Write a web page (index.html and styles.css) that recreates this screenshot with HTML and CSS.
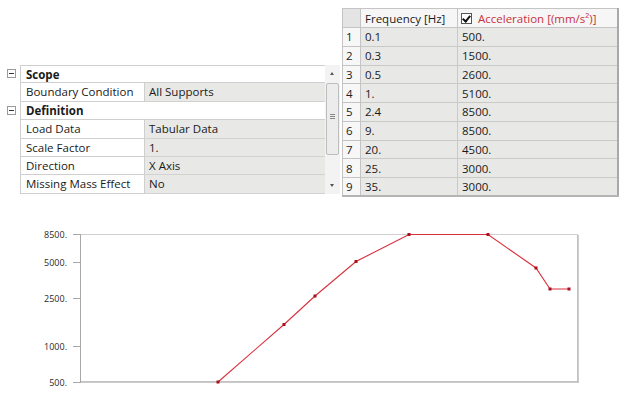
FILE: index.html
```html
<!DOCTYPE html>
<html>
	<head>
		<meta charset="UTF-8">
		<title>Response Spectrum</title>
		<link rel="stylesheet" href="styles.css">
	</head>
	<body>
		<div class="top">
			<div class="props">
				<div class="grid">
					<div class="row cat">
						<span class="gut"><i class="tog"></i></span>
						<span class="name">Scope</span>
					</div>
					<div class="row">
						<span class="gut"></span>
						<span class="label">Boundary Condition</span>
						<span class="value">All Supports</span>
					</div>
					<div class="row cat">
						<span class="gut"><i class="tog"></i></span>
						<span class="name">Definition</span>
					</div>
					<div class="row">
						<span class="gut"></span>
						<span class="label">Load Data</span>
						<span class="value">Tabular Data</span>
					</div>
					<div class="row">
						<span class="gut"></span>
						<span class="label">Scale Factor</span>
						<span class="value">1.</span>
					</div>
					<div class="row">
						<span class="gut"></span>
						<span class="label">Direction</span>
						<span class="value">X Axis</span>
					</div>
					<div class="row">
						<span class="gut"></span>
						<span class="label">Missing Mass Effect</span>
						<span class="value">No</span>
					</div>
				</div>
				<div class="scroll">
					<span class="arrow up"></span>
					<div class="track">
						<div class="thumb"><span class="grip"></span></div>
					</div>
					<span class="arrow down"></span>
				</div>
			</div>
			<table class="data">
				<tr class="head">
					<th class="corner"></th>
					<th>Frequency [Hz]</th>
					<th class="acc"><span class="check"></span>Acceleration [(mm/s²)]</th>
				</tr>
				<tr><td class="num">1</td><td>0.1</td><td>500.</td></tr>
				<tr><td class="num">2</td><td>0.3</td><td>1500.</td></tr>
				<tr><td class="num">3</td><td>0.5</td><td>2600.</td></tr>
				<tr><td class="num">4</td><td>1.</td><td>5100.</td></tr>
				<tr><td class="num">5</td><td>2.4</td><td>8500.</td></tr>
				<tr><td class="num">6</td><td>9.</td><td>8500.</td></tr>
				<tr><td class="num">7</td><td>20.</td><td>4500.</td></tr>
				<tr><td class="num">8</td><td>25.</td><td>3000.</td></tr>
				<tr><td class="num">9</td><td>35.</td><td>3000.</td></tr>
			</table>
		</div>
		<div class="chart">
			<svg width="640" height="176" viewBox="0 220 640 176">
				<rect x="80.5" y="234.5" width="497" height="147" fill="#fff" stroke="#cfcfcf"/>
				<line x1="578" y1="235" x2="578" y2="383" stroke="#bdbdbd" stroke-width="1.5"/>
				<line x1="80" y1="382" x2="578" y2="382" stroke="#bdbdbd" stroke-width="1.5"/>
				<line x1="80.5" y1="234" x2="80.5" y2="383" stroke="#a8a8a8"/>
				<g stroke="#a8a8a8">
					<line x1="73" y1="234.5" x2="80" y2="234.5"/>
					<line x1="73" y1="262.5" x2="80" y2="262.5"/>
					<line x1="73" y1="298.5" x2="80" y2="298.5"/>
					<line x1="73" y1="346.5" x2="80" y2="346.5"/>
					<line x1="73" y1="382.5" x2="80" y2="382.5"/>
				</g>
				<g class="ylab" text-anchor="end">
					<text x="67" y="238">8500.</text>
					<text x="67" y="266">5000.</text>
					<text x="67" y="302">2500.</text>
					<text x="67" y="350">1000.</text>
					<text x="67" y="386">500.</text>
				</g>
				<polyline fill="none" stroke="#d8303c" stroke-width="1.1" points="218,382 284,324.5 315,296 356,261.5 409,234.5 488,234.5 536,268 550,289 569,289"/>
				<g fill="#a8101c">
					<rect x="216.5" y="380.5" width="3" height="3"/>
					<rect x="282.5" y="323" width="3" height="3"/>
					<rect x="313.5" y="294.5" width="3" height="3"/>
					<rect x="354.5" y="260" width="3" height="3"/>
					<rect x="407.5" y="233" width="3" height="3"/>
					<rect x="486.5" y="233" width="3" height="3"/>
					<rect x="534.5" y="266.5" width="3" height="3"/>
					<rect x="548.5" y="287.5" width="3" height="3"/>
					<rect x="567.5" y="287.5" width="3" height="3"/>
				</g>
			</svg>
		</div>
	</body>
</html>
```
FILE: styles.css
```css
*{
	margin: 0;
	padding: 0;
	box-sizing: border-box;
}
body{
	width: 640px;
	height: 396px;
	background: white;
	font-family: "Open Sans", "Noto Sans", sans-serif;
	font-size: 11.5px;
	color: #1a1a1a;
	overflow: hidden;
}
.top{
	display: flex;
	align-items: flex-start;
	padding-top: 8px;
	height: 200px;
}
.props{
	display: flex;
	margin: 57px 0 0 6px;
	width: 334px;
}
.grid{
	width: 319px;
}
.row{
	display: flex;
	height: 18.4px;
	line-height: 17px;
}
.row .gut{
	width: 14px;
	flex: none;
	position: relative;
}
.row .label{
	width: 125px;
	padding-left: 5px;
	border-left: 1px solid #cfcfcf;
	border-right: 1px solid #cfcfcf;
	border-bottom: 1px solid #cfcfcf;
	white-space: nowrap;
}
.row .value{
	flex: 1;
	padding-left: 4px;
	background: #e8e8e6;
	border-bottom: 1px solid #d2d2d0;
}
.row.cat .name{
	flex: 1;
	padding-left: 5px;
	font-weight: bold;
	border-left: 1px solid #cfcfcf;
	border-bottom: 1px solid #cfcfcf;
}
.row:first-child .name{
	border-top: 1px solid #cfcfcf;
}
.tog{
	position: absolute;
	left: 1px;
	top: 4px;
	width: 9px;
	height: 9px;
	border: 1px solid #9a9a9a;
	background: white;
}
.tog:after{
	content: "";
	position: absolute;
	left: 1px;
	top: 3px;
	width: 5px;
	height: 1px;
	background: #333;
}
.scroll{
	width: 15px;
	height: 129px;
	display: flex;
	flex-direction: column;
	background: #f3f3f3;
}
.scroll .arrow{
	height: 18px;
	flex: none;
	position: relative;
}
.scroll .arrow:after{
	content: "";
	position: absolute;
	left: 5px;
	border-left: 2.5px solid transparent;
	border-right: 2.5px solid transparent;
}
.scroll .up:after{
	top: 7px;
	border-bottom: 3px solid #555;
}
.scroll .down:after{
	top: 8px;
	border-top: 3px solid #555;
}
.scroll .track{
	flex: 1;
	padding: 0 1px;
}
.scroll .thumb{
	height: 72px;
	border: 1px solid #bdbdbd;
	border-radius: 2px;
	background: #ececec;
	position: relative;
}
.scroll .grip{
	position: absolute;
	left: 3px;
	top: 30px;
	width: 5px;
	height: 5px;
	border-top: 1px solid #888;
	border-bottom: 1px solid #888;
}
.scroll .grip:after{
	content: "";
	position: absolute;
	left: 0;
	top: 1px;
	width: 5px;
	height: 1px;
	background: #888;
}
.data{
	margin-left: 2px;
	border-collapse: collapse;
	border-right: 2px solid #a9a9a9;
	border-bottom: 2px solid #b4b4b4;
	table-layout: fixed;
	width: 277px;
}
.data th, .data td{
	height: 18.75px;
	line-height: 17px;
	padding: 0 0 0 4px;
	text-align: left;
	font-weight: normal;
	white-space: nowrap;
	border: 1px solid #c9c9c6;
	background: #e8e8e6;
}
.data .head th{
	height: 19px;
	background: #f6f6f6;
	border-color: #c4c4c4;
}
.data .head th.corner{
	width: 18px;
	background: #e4e4e4;
}
.data .head th:nth-child(2){
	width: 97px;
}
.data .head th.acc{
	color: #c8323c;
	padding-left: 3px;
}
.check{
	display: inline-block;
	width: 11px;
	height: 11px;
	border: 1px solid #555;
	background: white;
	margin-right: 6px;
	vertical-align: -1px;
	position: relative;
}
.check:after{
	content: "";
	position: absolute;
	left: 2px;
	top: 0;
	width: 3px;
	height: 6px;
	border-right: 2px solid #111;
	border-bottom: 2px solid #111;
	transform: rotate(40deg);
}
.data td.num{
	padding-left: 3px;
	background: #f7f7f7;
	border-color: #c4c4c4;
	color: #222;
}
.chart{
	margin-top: 20px;
}
.chart svg{
	display: block;
}
.ylab text{
	font-family: "Open Sans", sans-serif;
	font-size: 9px;
	fill: #2a2a2a;
}
```
